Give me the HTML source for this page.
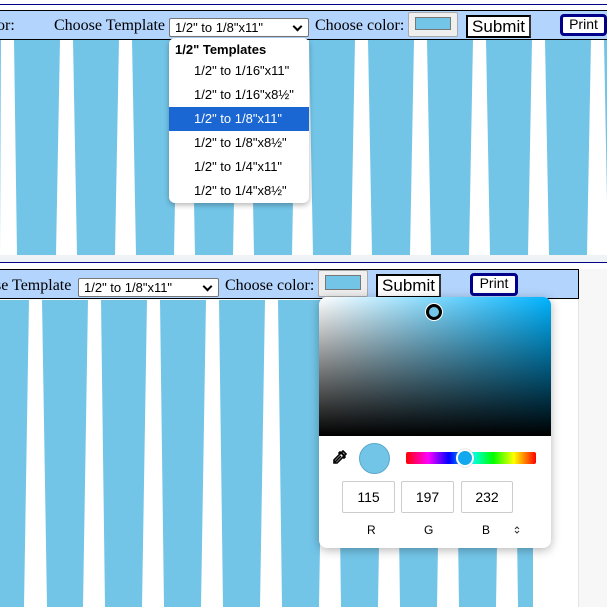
<!DOCTYPE html>
<html><head><meta charset="utf-8"><style>
body{margin:0;width:607px;height:607px;overflow:hidden;background:#fff;position:relative;font-family:"Liberation Serif",serif;}
.a{position:absolute;}
.bar{background:#b3d4fc;border:1px solid #000;height:28px;}
.t{font-size:16px;color:#000;white-space:nowrap;}
.sel{background:#fff;border:1px solid #767676;border-radius:2px;font-family:"Liberation Sans",sans-serif;font-size:13px;box-sizing:border-box;padding:1px 5px;white-space:nowrap;}
.sel:after{content:"";position:absolute;right:7px;top:4px;width:5px;height:5px;border-right:2px solid #000;border-bottom:2px solid #000;transform:rotate(45deg);}
.cb{background:#efefef;border:1px solid #aaa;border-radius:2px;box-sizing:border-box;}
.cb div{position:absolute;left:6px;top:4px;right:6px;bottom:6px;background:#73c5e8;border:1px solid #777;}
.btn{background:#fff;border:2px solid #000;border-right-color:#333;font-family:"Liberation Sans",sans-serif;font-size:17px;text-align:center;box-sizing:border-box;line-height:19px;}
.pr{background:#fff;border:3px solid #00008b;border-radius:4px;font-family:"Liberation Sans",sans-serif;font-size:14px;text-align:center;box-sizing:border-box;line-height:15px;}
.dd{font-family:"Liberation Sans",sans-serif;font-size:13px;}
.in{border:1px solid #ccc;border-radius:2px;font-family:"Liberation Sans",sans-serif;font-size:14px;text-align:center;line-height:30px;box-sizing:border-box;}
.lb{font-family:"Liberation Sans",sans-serif;font-size:12px;}
</style></head><body>
<div class="a" style="left:0;top:4px;width:607px;height:1px;background:#00008b"></div>
<svg class="a" style="left:0;top:40px" width="607" height="215">
<rect width="607" height="215" fill="#73c5e8"/>
<g fill="#fff">
<polygon points="1,0 14,0 17,215 0,215"/>
<polygon points="60,0 73,0 77,215 56,215"/>
<polygon points="119,0 132,0 136,215 115,215"/>
<polygon points="178,0 191,0 195,215 174,215"/>
<polygon points="237,0 250,0 254,215 233,215"/>
<polygon points="296,0 309,0 313,215 292,215"/>
<polygon points="355,0 368,0 372,215 351,215"/>
<polygon points="414,0 427,0 431,215 410,215"/>
<polygon points="473,0 486,0 490,215 469,215"/>
<polygon points="532,0 545,0 549,215 528,215"/>
<polygon points="591,0 604,0 608,215 587,215"/>
</g></svg>
<div class="a" style="left:0;top:255px;width:607px;height:7px;background:#f0f3f6"></div>
<div class="a" style="left:0;top:262px;width:607px;height:1px;background:#00008b"></div>

<div class="a bar" style="left:-2px;top:10px;width:612px;"></div>
<div class="a t" style="left:-3px;top:17px">or:</div>
<div class="a t" style="left:54px;top:17px">Choose Template</div>
<div class="a sel" style="left:169px;top:18px;width:140px;height:19px;">1/2" to 1/8"x11"</div>
<div class="a t" style="left:315px;top:17px">Choose color:</div>
<div class="a cb" style="left:408px;top:12px;width:50px;height:25px"><div></div></div>
<div class="a btn" style="left:466px;top:15px;width:65px;height:23px">Submit</div>
<div class="a pr" style="left:560px;top:14px;width:47px;height:22px">Print</div>

<div class="a" style="left:169px;top:38px;width:140px;height:165px;background:#fff;border-radius:6px;box-shadow:0 2px 6px rgba(0,0,0,.3);"></div>
<div class="a dd" style="left:175px;top:42px;font-weight:bold">1/2" Templates</div>
<div class="a dd" style="left:194px;top:63px">1/2" to 1/16"x11"</div>
<div class="a dd" style="left:194px;top:87px">1/2" to 1/16"x8½"</div>
<div class="a" style="left:169px;top:107px;width:140px;height:24px;background:#1a66d2"></div>
<div class="a dd" style="left:194px;top:111px;color:#fff">1/2" to 1/8"x11"</div>
<div class="a dd" style="left:194px;top:135px">1/2" to 1/8"x8½"</div>
<div class="a dd" style="left:194px;top:159px">1/2" to 1/4"x11"</div>
<div class="a dd" style="left:194px;top:183px">1/2" to 1/4"x8½"</div>

<div class="a" style="left:578px;top:269px;width:29px;height:338px;background:#f7f7f7;border-left:1px solid #e4e4e4"></div>
<svg class="a" style="left:0;top:300px" width="533" height="307">
<rect width="533" height="307" fill="#73c5e8"/>
<g fill="#fff">
<polygon points="29,0 42,0 47,307 24,307"/>
<polygon points="88,0 101,0 105,307 83,307"/>
<polygon points="147,0 160,0 164,307 142,307"/>
<polygon points="206,0 219,0 223,307 201,307"/>
<polygon points="265,0 278,0 282,307 260,307"/>
<polygon points="324,0 337,0 341,307 319,307"/>
<polygon points="383,0 396,0 400,307 378,307"/>
<polygon points="442,0 455,0 459,307 437,307"/>
<polygon points="501,0 514,0 518,307 496,307"/>
</g></svg>

<div class="a bar" style="left:-2px;top:269px;width:579px;"></div>
<div class="a t" style="left:-5px;top:277px">se Template</div>
<div class="a sel" style="left:78px;top:278px;width:141px;height:19px;">1/2" to 1/8"x11"</div>
<div class="a t" style="left:225px;top:277px">Choose color:</div>
<div class="a cb" style="left:318px;top:270px;width:50px;height:27px"><div></div></div>
<div class="a btn" style="left:376px;top:274px;width:65px;height:24px">Submit</div>
<div class="a pr" style="left:470px;top:273px;width:48px;height:23px">Print</div>

<div class="a" style="left:319px;top:297px;width:232px;height:251px;background:#fff;border-radius:8px;box-shadow:0 2px 10px rgba(0,0,0,.3);overflow:hidden">
 <div class="a" style="left:0;top:0;width:232px;height:139px;background:linear-gradient(to bottom,rgba(0,0,0,0),#000),linear-gradient(to right,#fff,#00b4ff)"></div>
 <div class="a" style="left:107px;top:7px;width:10px;height:10px;border-radius:50%;background:#73c5e8;border:3px solid #000;box-shadow:0 0 0 1px #fff"></div>
 <svg class="a" style="left:12px;top:153px" width="16" height="16" viewBox="0 0 16 16"><path d="M12 1l3 3-2 2 1 1-1 1-1-1-6 6H3v-3l6-6-1-1 1-1 1 1z M4 12l6-6" fill="none" stroke="#000" stroke-width="1.6"/><path d="M11 2l3 3-2 1-2-2z" fill="#000"/></svg>
 <div class="a" style="left:40px;top:146px;width:31px;height:31px;border-radius:50%;background:#73c5e8;border:1px solid #5aa9cc;box-sizing:border-box"></div>
 <div class="a" style="left:87px;top:155px;width:130px;height:12px;border-radius:2px;background:linear-gradient(to right,#f00,#f0f 17%,#00f 33%,#0ff 50%,#0f0 67%,#ff0 83%,#f00)"></div>
 <div class="a" style="left:137px;top:152px;width:14px;height:14px;border-radius:50%;background:#12a8f0;border:2px solid #fff;box-shadow:0 0 1px #888"></div>
 <div class="a in" style="left:23px;top:184px;width:53px;height:32px">115</div>
 <div class="a in" style="left:82px;top:184px;width:53px;height:32px">197</div>
 <div class="a in" style="left:142px;top:184px;width:52px;height:32px">232</div>
 <div class="a lb" style="left:48px;top:226px">R</div>
 <div class="a lb" style="left:105px;top:226px">G</div>
 <div class="a lb" style="left:163px;top:226px">B</div>
 <svg class="a" style="left:195px;top:228px" width="6" height="10"><path d="M1 4l2-2 2 2M1 6l2 2 2-2" fill="none" stroke="#333" stroke-width="1"/></svg>
</div>
</body></html>
